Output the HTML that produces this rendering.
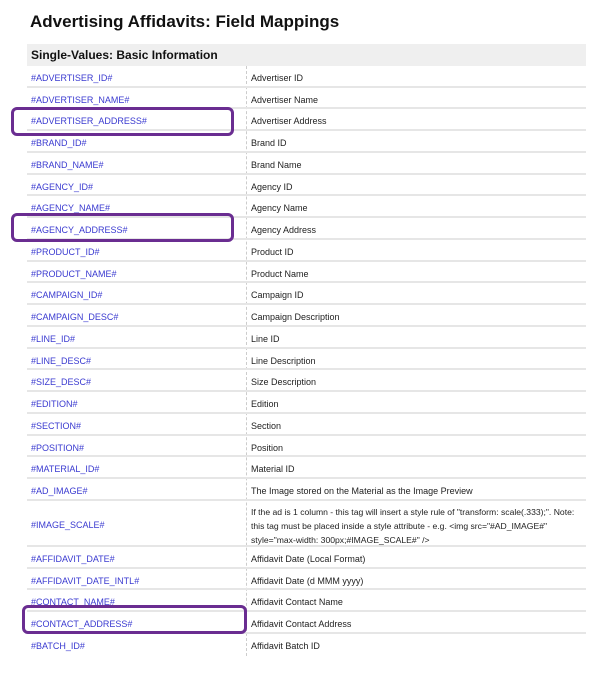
<!DOCTYPE html>
<html><head><style>
body{margin:0;width:596px;height:675px;background:#fff;font-family:"Liberation Sans",Arial,sans-serif;position:relative;overflow:hidden}
h1{position:absolute;left:30px;top:12px;margin:0;font-size:17px;font-weight:bold;color:#111}
.hd{position:absolute;left:27px;top:44px;width:559px;height:22px;background:#efefef;font-weight:bold;font-size:12px;line-height:23px;box-sizing:border-box;padding-left:4px;color:#111}
.r{position:absolute;left:27px;width:559px;border-bottom:2px solid #e6e6e6;box-sizing:border-box;font-size:9px;color:#222}
.r .a{position:absolute;left:4px;top:2px;color:#3a3ad0}
.r .b{position:absolute;left:224px;top:2px;width:330px;line-height:14px}
.d{position:absolute;left:246px;top:66px;height:590px;border-left:1px dashed #ccc}
.box{position:absolute;border:3px solid #6a2d91;border-radius:6px;box-sizing:border-box}
</style></head><body>
<h1>Advertising Affidavits: Field Mappings</h1>
<div class="hd">Single-Values: Basic Information</div>
<div class="d"></div>
<div id="rows"></div>
<script>
var rows=[["#ADVERTISER_ID#","Advertiser ID"],["#ADVERTISER_NAME#","Advertiser Name"],["#ADVERTISER_ADDRESS#","Advertiser Address"],["#BRAND_ID#","Brand ID"],["#BRAND_NAME#","Brand Name"],["#AGENCY_ID#","Agency ID"],["#AGENCY_NAME#","Agency Name"],["#AGENCY_ADDRESS#","Agency Address"],["#PRODUCT_ID#","Product ID"],["#PRODUCT_NAME#","Product Name"],["#CAMPAIGN_ID#","Campaign ID"],["#CAMPAIGN_DESC#","Campaign Description"],["#LINE_ID#","Line ID"],["#LINE_DESC#","Line Description"],["#SIZE_DESC#","Size Description"],["#EDITION#","Edition"],["#SECTION#","Section"],["#POSITION#","Position"],["#MATERIAL_ID#","Material ID"],["#AD_IMAGE#","The Image stored on the Material as the Image Preview"]];
var h="",H=21.74;
rows.forEach(function(r,i){var t=66+i*H;h+='<div class="r" style="top:'+t+'px;height:'+H+'px;line-height:'+(H-1)+'px"><span class="a">'+r[0]+'</span><span class="b" style="line-height:'+(H-1)+'px">'+r[1]+'</span></div>';});
h+='<div class="r" style="top:501px;height:46px"><span class="a" style="line-height:44px">#IMAGE_SCALE#</span><span class="b" style="top:4px;font-size:8.6px">If the ad is 1 column - this tag will insert a style rule of "transform: scale(.333);". Note: this tag must be placed inside a style attribute - e.g. &lt;img src="#AD_IMAGE#" style="max-width: 300px;#IMAGE_SCALE#" /&gt;</span></div>';
var r2=[["#AFFIDAVIT_DATE#","Affidavit Date (Local Format)"],["#AFFIDAVIT_DATE_INTL#","Affidavit Date (d MMM yyyy)"],["#CONTACT_NAME#","Affidavit Contact Name"],["#CONTACT_ADDRESS#","Affidavit Contact Address"],["#BATCH_ID#","Affidavit Batch ID"]];
r2.forEach(function(r,i){var t=547+i*H;h+='<div class="r" style="top:'+t+'px;height:'+H+'px;line-height:'+(H-1)+'px'+(i==4?';border-bottom:none':'')+'"><span class="a">'+r[0]+'</span><span class="b" style="line-height:'+(H-1)+'px">'+r[1]+'</span></div>';});
document.getElementById('rows').innerHTML=h;
</script>
<div class="box" style="left:11px;top:107px;width:223px;height:29px"></div>
<div class="box" style="left:11px;top:213px;width:223px;height:29px"></div>
<div class="box" style="left:22px;top:605px;width:225px;height:29px"></div>
</body></html>
